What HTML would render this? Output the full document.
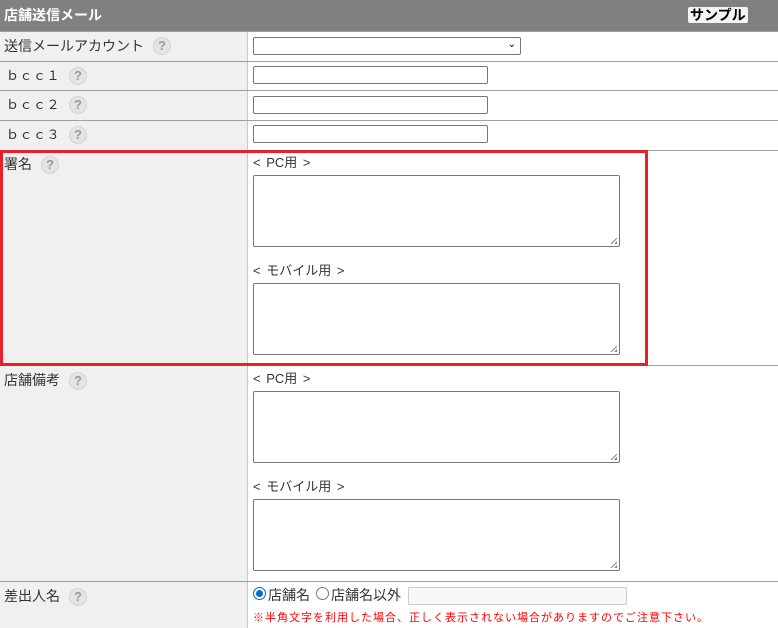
<!DOCTYPE html>
<html><head><meta charset="utf-8"><style>
*{box-sizing:border-box;margin:0;padding:0}
body{width:778px;height:628px;background:#fff;position:relative;overflow:hidden;font-family:"Liberation Sans","Noto Sans CJK JP",sans-serif;font-size:13px;color:#333}
.a{position:absolute}
.hdr{left:0;top:0;width:778px;height:31px;background:#808080;color:#fff;font-weight:bold;font-size:14px;padding:5px 0 0 4px}
.smp{left:688px;top:7px;height:16px;background:#f4f4f4;color:#000;font-weight:bold;font-size:14px;line-height:16px;padding:0 2px;border-radius:2px}
.left{left:0;top:31px;width:248px;height:597px;background:#f0f0f0;border-right:1px solid #c8c8c8}
.hl{left:0;width:778px;height:1px;background:#a0a0a0}
.lbl{left:4px;font-size:14px;color:#333;line-height:18px}
.q{width:18px;height:18px;border-radius:50%;background:#e4e4e4;border:1px solid #d4d4d4;color:#999;font-weight:bold;font-size:13px;text-align:center;line-height:16px}
.inp{border:1px solid #777;border-radius:2px;background:#fff}
.ta{border:1px solid #777;border-radius:2px;background:#fff;width:367px;height:72px;left:253px}
.ta:after{content:"";position:absolute;right:2px;bottom:2px;width:6px;height:6px;background:linear-gradient(135deg,transparent 45%,#888 45%,#888 55%,transparent 55%,transparent 75%,#888 75%)}
.sub{left:253px;font-size:13px;color:#333;line-height:16px;word-spacing:2px}
.bcc{left:6px;font-size:13px;letter-spacing:0.5px}
</style></head><body>
<div class="a hdr">店舗送信メール</div>
<div class="a smp">サンプル</div>
<div class="a left"></div>
<div class="a hl" style="top:31px"></div>
<div class="a hl" style="top:61px"></div>
<div class="a hl" style="top:90px"></div>
<div class="a hl" style="top:120px"></div>
<div class="a hl" style="top:150px"></div>
<div class="a hl" style="top:365px"></div>
<div class="a hl" style="top:581px"></div>

<div class="a lbl" style="top:37px">送信メールアカウント</div><div class="a q" style="left:153px;top:37px">?</div>
<div class="a lbl bcc" style="top:67px">ｂｃｃ１</div><div class="a q" style="left:69px;top:67px">?</div>
<div class="a lbl bcc" style="top:96px">ｂｃｃ２</div><div class="a q" style="left:69px;top:96px">?</div>
<div class="a lbl bcc" style="top:126px">ｂｃｃ３</div><div class="a q" style="left:69px;top:126px">?</div>
<div class="a lbl" style="top:155px">署名</div><div class="a q" style="left:41px;top:156px">?</div>
<div class="a lbl" style="top:371px">店舗備考</div><div class="a q" style="left:69px;top:372px">?</div>
<div class="a lbl" style="top:587px">差出人名</div><div class="a q" style="left:69px;top:588px">?</div>

<div class="a inp" style="left:253px;top:37px;width:268px;height:18px"><span class="a" style="right:4px;top:1px;font-size:10px;color:#000">&#8964;</span></div>
<div class="a inp" style="left:253px;top:66px;width:235px;height:18px"></div>
<div class="a inp" style="left:253px;top:96px;width:235px;height:18px"></div>
<div class="a inp" style="left:253px;top:125px;width:235px;height:18px"></div>

<div class="a sub" style="top:155px">&lt; PC用 &gt;</div>
<div class="a ta" style="top:175px"></div>
<div class="a sub" style="top:263px">&lt; モバイル用 &gt;</div>
<div class="a ta" style="top:283px"></div>
<div class="a sub" style="top:371px">&lt; PC用 &gt;</div>
<div class="a ta" style="top:391px"></div>
<div class="a sub" style="top:479px">&lt; モバイル用 &gt;</div>
<div class="a ta" style="top:499px"></div>

<div class="a" style="left:0;top:150px;width:648px;height:216px;border:3px solid #e8202a"></div>

<div class="a" style="left:253px;top:587px;width:13px;height:13px;border-radius:50%;border:1px solid #0a66d8;background:#fff"><div class="a" style="left:2px;top:2px;width:7px;height:7px;border-radius:50%;background:#0a66d8"></div></div>
<div class="a" style="left:268px;top:585px;font-size:14px">店舗名</div>
<div class="a" style="left:316px;top:587px;width:13px;height:13px;border-radius:50%;border:1px solid #777;background:#fff"></div>
<div class="a" style="left:331px;top:585px;font-size:14px">店舗名以外</div>
<div class="a" style="left:408px;top:587px;width:219px;height:18px;border:1px solid #ccc;border-radius:2px;background:#f8f8f8"></div>
<div class="a" style="left:253px;top:609px;font-size:11px;color:#f00;letter-spacing:1px">※半角文字を利用した場合、正しく表示されない場合がありますのでご注意下さい。</div>
</body></html>
